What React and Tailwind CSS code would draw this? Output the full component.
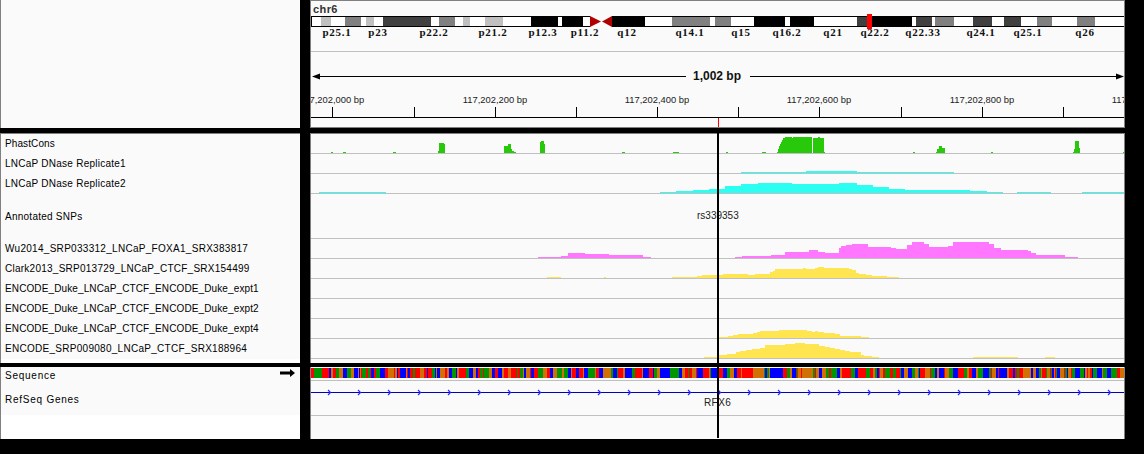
const bands = [
  [312,321,'#fff'],[321,331,'#c0c0c0'],[331,345,'#fff'],[345,361,'#808080'],[361,366,'#fff'],[366,374,'#c0c0c0'],[374,383,'#fff'],[383,431,'#404040'],[431,439,'#fff'],[439,455,'#808080'],[455,463,'#fff'],[463,470,'#c0c0c0'],[470,485,'#fff'],[485,503,'#c0c0c0'],[503,531,'#fff'],[531,558,'#000'],[558,562,'#fff'],[562,583,'#000'],[583,590,'#fff'],
  [612,645,'#000'],[645,672,'#fff'],[672,710,'#808080'],[710,715,'#fff'],[715,731,'#808080'],[731,754,'#fff'],[754,785,'#000'],[785,790,'#fff'],[790,814,'#000'],[814,857,'#fff'],[857,872,'#404040'],[872,912,'#000'],[912,916,'#fff'],[916,932,'#404040'],[932,935,'#fff'],[935,954,'#808080'],[954,973,'#fff'],[973,992,'#404040'],[992,1004,'#fff'],[1004,1021,'#404040'],[1021,1037,'#fff'],[1037,1052,'#808080'],[1052,1077,'#fff'],[1077,1095,'#808080'],[1095,1124,'#fff'],
];
const cyto = [['p25.1',337],['p23',378],['p22.2',434],['p21.2',493],['p12.3',543],['p11.2',585],['q12',627],['q14.1',690],['q15',741],['q16.2',787],['q21',833],['q22.2',875],['q22.33',923],['q24.1',981],['q25.1',1028],['q26',1085]];
const ticks = [332,414,495,576,657,738,819,901,982,1063];
const tickLabels = [['117,202,000 bp',332],['117,202,200 bp',495],['117,202,400 bp',657],['117,202,600 bp',819],['117,202,800 bp',982],['117,203,000 bp',1144]];

const GREEN='#27c90a', CYAN='#2cfff2', PINK='#ff77ff', YELLOW='#ffe650';

const rows = [
  { label:'PhastCons', h:20, tr:'tracking-[0.1px]', color:GREEN, data:[[331,333,1],[343,346,1],[393,396,1],[438,439,2],[439,444,10],[444,445,9],[504,508,7],[508,511,9],[511,512,4],[512,514,2],[514,516,1],[540,541,11],[541,544,12],[544,545,9],[622,625,1],[673,679,1],[726,728,1],[762,766,1],[777,778,1],[778,779,4],[779,780,7],[780,781,9],[781,782,11],[782,783,13],[783,785,15],[785,792,16],[792,793,15],[793,812,16],[813,818,15],[818,820,16],[820,824,15],[824,825,1],[913,915,1],[936,937,1],[937,939,4],[939,942,7],[942,945,5],[991,993,1],[1073,1074,1],[1074,1075,4],[1075,1079,12],[1079,1080,5],[1123,1124,1]] },
  { label:'LNCaP DNase Replicate1', h:20, tr:'tracking-[0.25px]', color:CYAN, data:[[741,806,1],[806,857,2],[857,954,1]] },
  { label:'LNCaP DNase Replicate2', h:20, tr:'tracking-[0.25px]', color:CYAN, data:[[319,386,1],[660,676,1],[676,693,2],[693,709,3],[709,725,4],[725,741,7],[741,758,9],[758,792,10],[792,839,9],[839,857,10],[857,873,8],[873,889,6],[889,905,4],[905,970,3],[970,987,2],[987,1003,1],[1017,1051,1],[1082,1124,1]] },
  { label:'Annotated SNPs', h:45, tr:'tracking-[0.25px]', color:GREEN, data:[], snp:true },
  { label:'Wu2014_SRP033312_LNCaP_FOXA1_SRX383817', h:20, tr:'tracking-[0.29px]', color:PINK, data:[[538,561,1],[561,568,2],[568,585,5],[585,609,4],[609,643,3],[643,651,1],[735,742,1],[742,771,2],[771,785,3],[785,809,6],[809,818,8],[818,825,6],[825,839,5],[839,841,10],[841,846,12],[846,852,13],[852,868,14],[868,891,11],[891,896,10],[896,907,9],[907,912,13],[912,924,16],[924,929,14],[929,934,11],[934,948,11],[948,953,12],[953,989,16],[989,994,14],[994,1001,10],[1001,1028,8],[1028,1031,7],[1031,1036,5],[1036,1065,3],[1065,1078,1]] },
  { label:'Clark2013_SRP013729_LNCaP_CTCF_SRX154499', h:20, tr:'tracking-[0.25px]', color:YELLOW, data:[[547,561,1],[604,606,1],[672,697,1],[697,702,2],[702,718,3],[718,723,3],[723,748,4],[748,755,3],[755,770,4],[770,773,6],[773,775,7],[775,803,9],[803,806,10],[806,815,9],[815,818,10],[818,824,11],[824,849,10],[849,852,9],[852,856,8],[856,859,5],[859,866,4],[866,872,3],[872,887,2],[887,899,1]] },
  { label:'ENCODE_Duke_LNCaP_CTCF_ENCODE_Duke_expt1', h:20, tr:'tracking-[0.12px]', color:YELLOW, data:[] },
  { label:'ENCODE_Duke_LNCaP_CTCF_ENCODE_Duke_expt2', h:20, tr:'tracking-[0.12px]', color:YELLOW, data:[] },
  { label:'ENCODE_Duke_LNCaP_CTCF_ENCODE_Duke_expt4', h:20, tr:'tracking-[0.12px]', color:YELLOW, data:[[718,728,1],[728,733,2],[733,738,3],[738,753,4],[753,757,5],[757,760,6],[760,779,7],[779,807,8],[807,812,7],[812,815,6],[815,818,7],[818,824,6],[824,835,5],[835,840,4],[840,861,2],[861,869,1]] },
  { label:'ENCODE_SRP009080_LNCaP_CTCF_SRX188964', h:20, tr:'tracking-[0.28px]', color:YELLOW, data:[[704,718,1],[718,727,3],[727,736,4],[736,740,6],[740,746,7],[746,752,8],[752,760,9],[760,765,10],[765,785,13],[785,795,14],[795,805,15],[805,819,14],[819,825,12],[825,830,11],[830,835,10],[835,840,9],[840,845,8],[845,850,7],[850,861,6],[861,864,3],[864,872,2],[872,879,1],[973,1018,1],[1045,1055,1]] },
];

const baseColors = ['#ff0000','#009600','#0000ff','#d17105'];
const stripes = [];
let seed = 12345;
for (let x = 311; x < 1124; ) {
  seed = (seed * 1103515245 + 12345) & 0x7fffffff;
  const c = baseColors[(seed >> 16) & 3];
  const w = 1 + ((seed >> 20) & 3);
  stripes.push([x, w, c]);
  x += w;
}
const chevrons = [];
for (let x = 329; x < 1124; x += 30) chevrons.push(x);

function Track({ h, data, color, snp }) {
  const vb = h - 1;
  return (
    <div className="relative border-b border-[#c0c0c0] bg-[#fafafa]" style={{ height: h }}>
      <svg className="block w-[813px]" width="813" height={vb} viewBox={`311 0 813 ${vb}`} shapeRendering="crispEdges">
        {data.map(([a, b, v], i) => (
          <rect key={i} x={a} width={b - a} y={vb - v} height={v} fill={color} />
        ))}
      </svg>
      {snp && (
        <span className="absolute left-[386px] top-[15px] text-[10px] leading-[13px] text-[#222]">rs339353</span>
      )}
    </div>
  );
}

function Label({ h, tr, children }) {
  return (
    <div className={`flex items-center pl-[4px] pb-px text-[10px] text-black whitespace-nowrap ${tr}`} style={{ height: h }}>
      {children}
    </div>
  );
}

export default function App() {
  return (
    <div className="relative w-[1144px] h-[454px] bg-black overflow-hidden font-['Liberation_Sans',Arial,sans-serif]">
      <div className="grid grid-cols-[300px_815px] grid-rows-[128px_235px_76px] gap-x-[10px]">
        {/* top left */}
        <div className="bg-[#fafafa] border-l border-[#808080]" />
        {/* top right: header */}
        <div className="bg-[#fafafa] border-l border-r border-t border-b border-[#808080] h-[128px] flex flex-col">
          <div className="h-[15px] pl-[2px] pt-px text-[11px] leading-[14px] font-bold tracking-[0.4px] text-[#333]">chr6</div>
          <svg className="block h-[27px] w-[813px] overflow-visible shrink-0" viewBox="311 16 813 27">
            <g shapeRendering="crispEdges">
              {bands.map(([a, b, c], i) => (
                <rect key={i} x={a} y={16} width={b - a} height={11} fill={c} />
              ))}
              <rect x="311" y="16" width="279" height="1" fill="#000" />
              <rect x="311" y="26" width="279" height="1" fill="#000" />
              <rect x="612" y="16" width="512" height="1" fill="#000" />
              <rect x="612" y="26" width="512" height="1" fill="#000" />
              <rect x="311" y="16" width="1" height="11" fill="#000" />
            </g>
            <polygon points="590,16 590,27 601,21.5" fill="#b00000" />
            <polygon points="612,16 612,27 602,21.5" fill="#b00000" />
            <rect x="867" y="14" width="5" height="15" fill="#ff0000" shapeRendering="crispEdges" />
            {cyto.map(([t, x]) => (
              <text key={t} x={x} y={36} textAnchor="middle" fontSize="11" fontWeight="700" letterSpacing="0.75" fill="#111" fontFamily="'Liberation Serif',serif">{t}</text>
            ))}
          </svg>
          <div className="h-px bg-[#c0c0c0] mt-[8px] shrink-0" />
          <div className="h-[24px] mt-[12px] flex items-center pl-px shrink-0">
            <svg className="w-[8px] h-[7px] shrink-0" viewBox="0 0 8 7"><polygon points="0,3.5 8,0.5 8,6.5" fill="#000" /></svg>
            <div className="flex-1 h-px bg-black" />
            <span className="px-[9px] text-[12px] font-bold text-[#111] ml-[-2px]">1,002 bp</span>
            <div className="flex-1 h-px bg-black" />
            <svg className="w-[8px] h-[7px] shrink-0" viewBox="0 0 8 7"><polygon points="8,3.5 0,0.5 0,6.5" fill="#000" /></svg>
          </div>
          <svg className="block w-[813px] h-[29px] shrink-0" viewBox="311 88 813 29">
            {tickLabels.map(([t, x]) => (
              <text key={t} x={x} y={103} textAnchor="middle" fontSize="9.4" fill="#222" fontFamily="'Liberation Sans',sans-serif">{t}</text>
            ))}
            <g shapeRendering="crispEdges">
              {ticks.map((x) => <rect key={x} x={x} y={107} width={1} height={10} fill="#000" />)}
            </g>
          </svg>
          <div className="relative flex-1 border-t border-black">
            <div className="absolute left-[407px] top-0 bottom-0 w-px bg-[#ff0000]" />
          </div>
        </div>

        {/* tracks */}
        <div className="mt-[5px] h-[230px] bg-white border-l border-[#808080] border-t">
          <div className="bg-[#fafafa]">
            {rows.map((r) => <Label key={r.label} h={r.h} tr={r.tr}>{r.label}</Label>)}
          </div>
        </div>
        <div className="mt-[5px] h-[230px] bg-[#fafafa] border-l border-r border-[#808080] border-t">
          {rows.map((r) => <Track key={r.label} {...r} />)}
        </div>

        {/* sequence + genes */}
        <div className="mt-[4px] h-[72px] bg-white border-l border-[#808080]">
          <div className="bg-[#fafafa] h-[48px] flex flex-col">
            <div className="h-[13px] pl-[4px] pr-[5px] flex items-center justify-between text-[10px] tracking-[0.75px] text-black">
              <span className="mt-[3px]">Sequence</span>
              <svg className="w-[15px] h-[8px] mt-[-1px]" viewBox="0 0 15 8"><path d="M0 2.5H10V0L15 4L10 8V5.5H0Z" fill="#000" /></svg>
            </div>
            <div className="pl-[4px] pt-[13px] text-[10px] leading-[13px] tracking-[0.75px] text-black">RefSeq Genes</div>
          </div>
        </div>
        <div className="mt-[4px] h-[72px] bg-[#fafafa] border-l border-r border-[#808080] flex flex-col">
          <svg className="block w-[813px] h-[10px] mt-px shrink-0" viewBox="311 0 813 10" shapeRendering="crispEdges">
            {stripes.map(([x, w, c], i) => <rect key={i} x={x} y={0} width={w} height={10} fill={c} />)}
          </svg>
          <div className="h-px bg-[#c0c0c0] mt-[2px] shrink-0" />
          <div className="relative h-[35px] border-b border-[#c0c0c0] shrink-0">
            <svg className="block w-[813px] h-[24px]" viewBox="311 0 813 24">
              <rect x="311" y="11" width="813" height="1" fill="#0000c0" shapeRendering="crispEdges" />
              {chevrons.map((x) => <path key={x} d={`M${x - 1} 9 L${x + 1.5} 11.5 L${x - 1} 14`} fill="none" stroke="#2a2aff" strokeWidth="1.2" />)}
            </svg>
            <span className="absolute left-[393px] top-[15px] text-[10px] leading-[13px] tracking-[0.4px] text-[#222]">RFX6</span>
          </div>
        </div>
      </div>

      {/* cursor line over all data panels */}
      <div className="absolute left-[717px] top-[133px] w-[2px] h-[305px] bg-black" />
    </div>
  );
}
